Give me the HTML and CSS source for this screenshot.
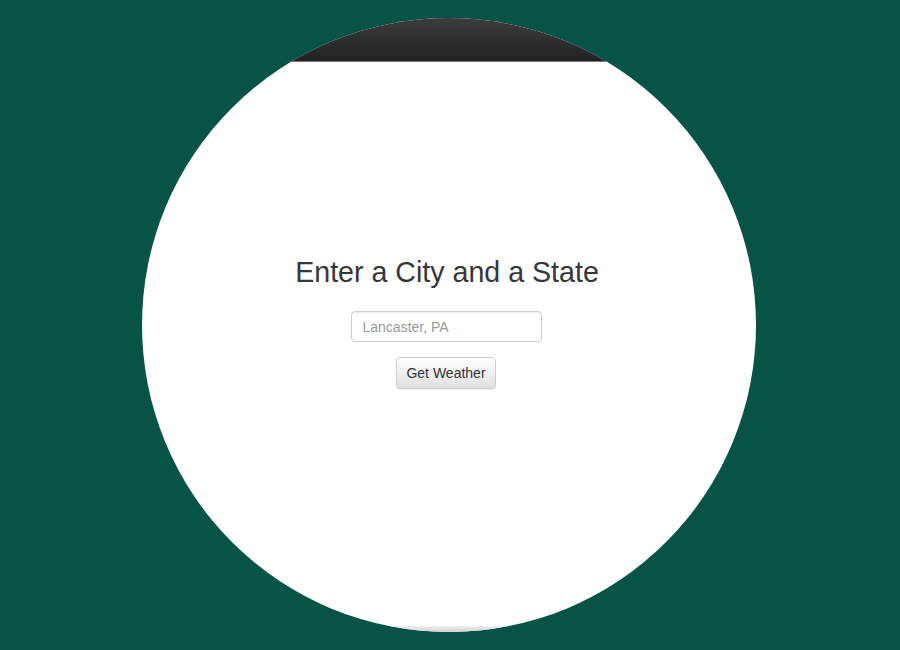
FILE: index.html
```html
<!DOCTYPE html>
<html>
<head>
<meta charset="utf-8">
<link rel="stylesheet" href="styles.css">
</head>
<body>
<div class="circle">
  <div class="navbar"></div>
  <main class="content">
    <h2 class="title">Enter a City and a State</h2>
    <input class="city" type="text" placeholder="Lancaster, PA">
    <button class="btn">Get Weather</button>
  </main>
  <div class="footer"></div>
</div>
</body>
</html>
```
FILE: styles.css
```css
html, body {
  margin: 0;
  padding: 0;
}
body {
  background: #075346;
  width: 900px;
  height: 650px;
  overflow: hidden;
  padding-top: 18px;
  box-sizing: border-box;
  font-family: "Liberation Sans", Arial, sans-serif;
}
.circle {
  width: 614px;
  height: 614px;
  margin: 0 auto;
  border-radius: 50%;
  overflow: hidden;
  background: #fff;
  display: flex;
  flex-direction: column;
  position: relative;
  left: -1px;
}
.navbar {
  height: 43px;
  flex: none;
  background: linear-gradient(#3c3c3c, #222);
  border-bottom: 1px solid #7d746e;
}
.content {
  flex: 1;
  display: flex;
  flex-direction: column;
  align-items: center;
  padding-top: 195px;
}
.title {
  margin: 0;
  font-size: 28.6px;
  font-weight: 400;
  line-height: 1.1;
  color: #363636;
  position: relative;
  left: -2px;
}
.city {
  margin-top: 23px;
  width: 191px;
  height: 31px;
  box-sizing: border-box;
  border: 1px solid #ccc;
  border-radius: 4px;
  padding: 6px 11px;
  font-family: "Liberation Sans", Arial, sans-serif;
  font-size: 14px;
  color: #555;
  box-shadow: inset 0 1px 1px rgba(0,0,0,.075);
  position: relative;
  left: -3px;
}
.city::placeholder {
  color: #999;
}
.btn {
  margin-top: 15px;
  width: 100px;
  height: 32px;
  box-sizing: border-box;
  border: 1px solid #ccc;
  border-radius: 4px;
  background: linear-gradient(#fff, #e0e0e0);
  font-family: "Liberation Sans", Arial, sans-serif;
  font-size: 14px;
  color: #333;
  box-shadow: inset 0 1px 0 rgba(255,255,255,.15), 0 1px 1px rgba(0,0,0,.075);
  position: relative;
  left: -3px;
}
.footer {
  height: 6px;
  flex: none;
  background: linear-gradient(#f0f0f0, #d0d0d0);
}
```
